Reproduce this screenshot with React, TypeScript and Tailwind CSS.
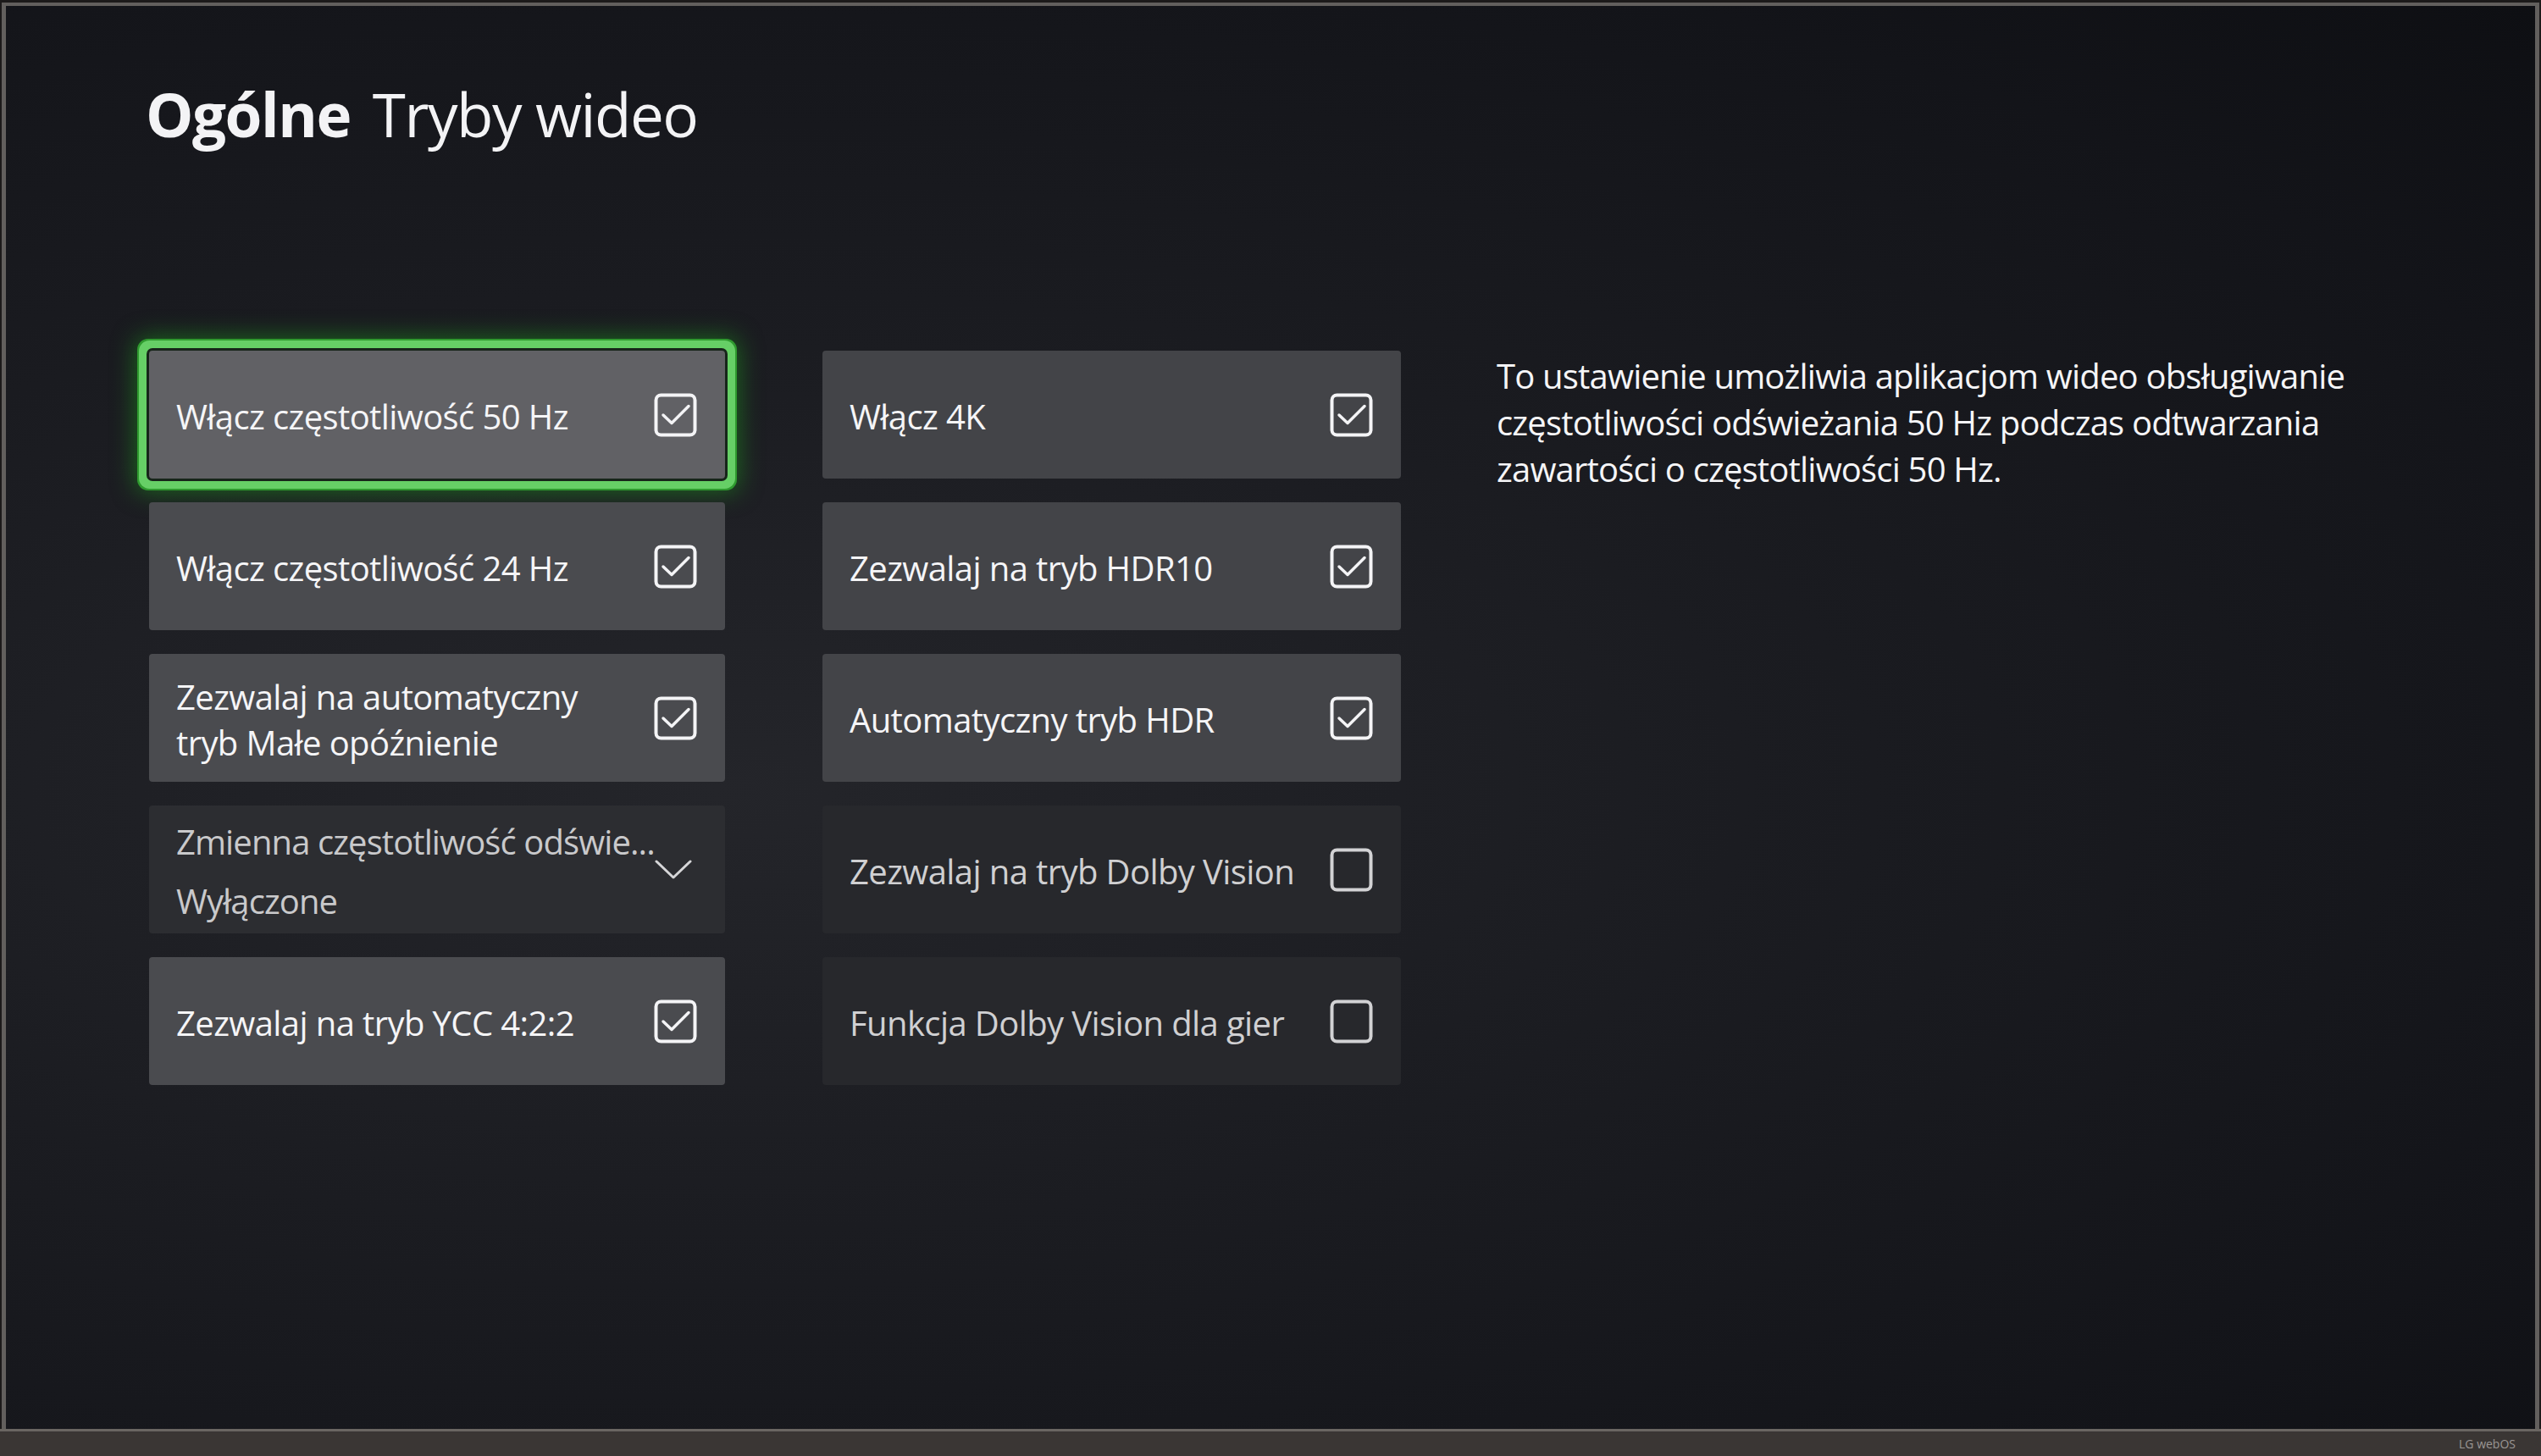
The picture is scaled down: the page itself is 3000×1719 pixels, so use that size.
import React from "react";

const font = { fontFamily: '"Open Sans", "Noto Sans", "Liberation Sans", sans-serif' };

function CheckBox({ checked, dim }: { checked: boolean; dim?: boolean }) {
  const c = dim ? "#d2d2d4" : "#f4f4f6";
  return (
    <svg width="52" height="52" viewBox="0 0 52 52" className="shrink-0">
      <rect x="2.5" y="2.5" width="46" height="47" rx="6" fill="none" stroke={c} strokeWidth="4" />
      {checked && (
        <polyline points="11,26 21,35.5 41,15.5" fill="none" stroke={c} strokeWidth="3.5" strokeLinecap="round" strokeLinejoin="round" />
      )}
    </svg>
  );
}

function Card({
  label,
  checked,
  variant,
}: {
  label: string;
  checked: boolean;
  variant: "focus" | "normal" | "normalR" | "dim" | "dimR";
}) {
  const bg =
    variant === "focus"
      ? "bg-[#616165]"
      : variant === "normal"
      ? "bg-[#4a4b4f]"
      : variant === "normalR"
      ? "bg-[#434448]"
      : variant === "dim"
      ? "bg-[#2b2c30]"
      : "bg-[#27282c]";
  const dim = variant === "dim" || variant === "dimR";
  const ring =
    variant === "focus"
      ? "shadow-[0_0_0_3px_#17251a,0_0_0_12px_#66cf66,0_0_0_14px_#2f9a2f,0_0_28px_16px_rgba(30,160,30,0.55)]"
      : "";
  return (
    <div className={`h-[151px] rounded-[4px] ${bg} ${ring} flex items-center justify-between pl-[32px] pr-[32px]`}>
      <span className={`pt-[5px] whitespace-nowrap text-[40px] leading-none tracking-[-0.6px] ${dim ? "text-[#d0d0d2]" : "text-[#f5f5f7]"}`}>{label}</span>
      <CheckBox checked={checked} dim={dim} />
    </div>
  );
}

function DropCard() {
  return (
    <div className="h-[151px] rounded-[4px] bg-[#2c2d31] flex items-center justify-between pl-[32px] pr-[42px]">
      <div className="pt-[4px] flex flex-col gap-[30px] whitespace-nowrap text-[40px] leading-none tracking-[-0.9px] text-[#c9c9cb]">
        <span>Zmienna częstotliwość odświe...</span>
        <span>Wyłączone</span>
      </div>
      <svg width="44" height="24" viewBox="0 0 44 24" className="shrink-0">
        <polyline points="2,2 22,21 42,2" fill="none" stroke="#d6d6d8" strokeWidth="3" strokeLinejoin="round" strokeLinecap="round" />
      </svg>
    </div>
  );
}

export default function App() {
  return (
    <div className="w-[3000px] h-[1719px] bg-[#1c1a1a] flex flex-col overflow-hidden" style={font}>
      <div className="flex-1 mt-[3px] mx-[2px] border-t-[4px] border-x-[5px] border-[#625f5d] bg-[radial-gradient(ellipse_at_28%_55%,#24252a_0%,#1b1c21_40%,#131419_80%,#0e0f13_100%)] flex flex-col">
        <div className="pl-[165px] pt-[92px] flex items-baseline gap-[26px] text-[#f3f3f5] text-[71px] leading-none tracking-[-1.5px]">
          <span className="font-bold">Ogólne</span>
          <span>Tryby wideo</span>
        </div>
        <div className="pl-[169px] mt-[244px] flex items-start">
          <div className="w-[680px] flex flex-col gap-[28px]">
            <Card label="Włącz częstotliwość 50 Hz" checked variant="focus" />
            <Card label="Włącz częstotliwość 24 Hz" checked variant="normal" />
            <div className="h-[151px] rounded-[4px] bg-[#4a4b4f] flex items-center justify-between pl-[32px] pr-[32px]">
              <div className="pt-[4px] flex flex-col whitespace-nowrap text-[40px] leading-[54px] tracking-[-0.6px] text-[#f5f5f7]">
                <span>Zezwalaj na automatyczny</span>
                <span>tryb Małe opóźnienie</span>
              </div>
              <CheckBox checked />
            </div>
            <DropCard />
            <Card label="Zezwalaj na tryb YCC 4:2:2" checked variant="normal" />
          </div>
          <div className="ml-[115px] w-[683px] flex flex-col gap-[28px]">
            <Card label="Włącz 4K" checked variant="normalR" />
            <Card label="Zezwalaj na tryb HDR10" checked variant="normalR" />
            <Card label="Automatyczny tryb HDR" checked variant="normalR" />
            <Card label="Zezwalaj na tryb Dolby Vision" checked={false} variant="dimR" />
            <Card label="Funkcja Dolby Vision dla gier" checked={false} variant="dimR" />
          </div>
          <div className="ml-[113px] mt-[2px] flex flex-col whitespace-nowrap text-[40px] leading-[55px] tracking-[-0.8px] text-[#f5f5f7]">
            <span>To ustawienie umożliwia aplikacjom wideo obsługiwanie</span>
            <span>częstotliwości odświeżania 50 Hz podczas odtwarzania</span>
            <span>zawartości o częstotliwości 50 Hz.</span>
          </div>
        </div>
      </div>
      <div className="h-[32px] bg-[#3a3634] border-t-[3px] border-[#6a6662] flex justify-end items-center pr-[30px]">
        <span className="text-[14px] text-[#9a9694]">LG webOS</span>
      </div>
    </div>
  );
}
